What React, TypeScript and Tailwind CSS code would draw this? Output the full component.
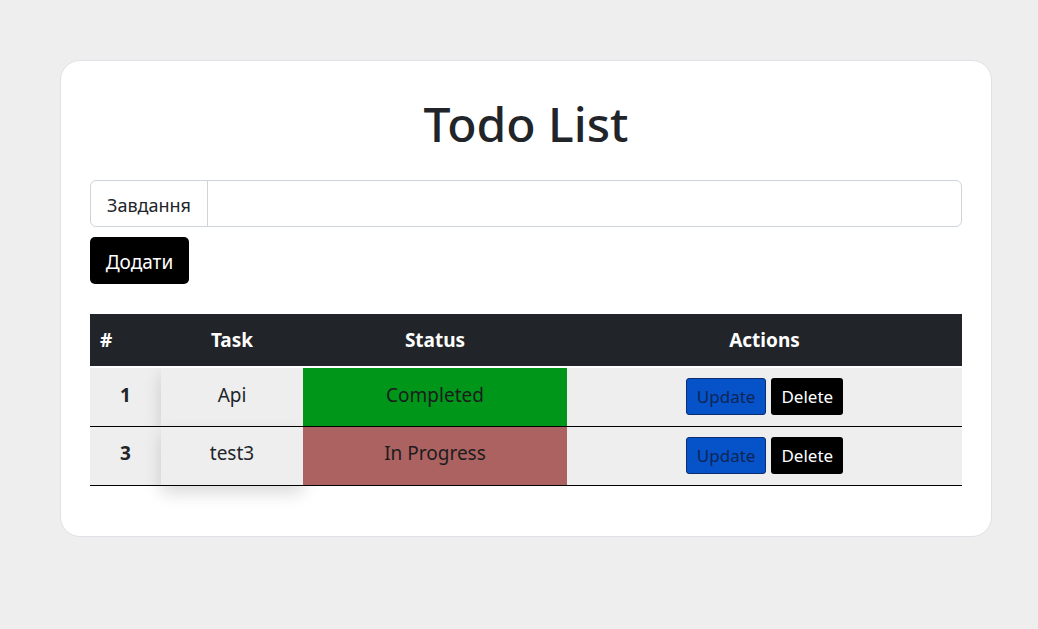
type Todo = {
  id: number;
  task: string;
  status: 'Completed' | 'In Progress';
};

const TODOS: Todo[] = [
  { id: 1, task: 'Api', status: 'Completed' },
  { id: 3, task: 'test3', status: 'In Progress' },
];

const STATUS_BG: Record<Todo['status'], string> = {
  Completed: 'bg-[#00961a]',
  'In Progress': 'bg-[#ad6262]',
};

function TodoRow({ todo }: { todo: Todo }) {
  return (
    <tr className="h-[59px] border-b border-black bg-[#eeeeee] text-[19px] text-[#212529]">
      <td className="pb-[4px] text-center font-bold">{todo.id}</td>
      <td className="pb-[4px] text-center shadow-[0_0.5rem_1rem_rgba(0,0,0,0.15)]">{todo.task}</td>
      <td className={`pb-[4px] text-center text-[#1c1c1c] ${STATUS_BG[todo.status]}`}>{todo.status}</td>
      <td className="text-center">
        <div className="flex items-center justify-center gap-[5px]">
          <button
            type="button"
            className="h-[37px] rounded-[3px] border border-[#0b2c6e] bg-[#0652c9] px-[10px] text-[17px] text-[#0d2655]"
          >
            Update
          </button>
          <button
            type="button"
            className="h-[37px] rounded-[3px] bg-black px-[10px] text-[17px] text-white"
          >
            Delete
          </button>
        </div>
      </td>
    </tr>
  );
}

export default function App() {
  return (
    <div
      className="min-h-screen bg-[#eeeeee] pt-[60px]"
      style={{ fontFamily: '"Noto Sans", "Open Sans", sans-serif' }}
    >
      <div className="ml-[60px] h-[477px] w-[932px] rounded-[20px] border border-[#dee2e6] bg-white px-[29px] pt-[34px]">
        <h1 className="text-center text-[48px] leading-[58px] font-medium text-[#212529]">Todo List</h1>

        <div className="mt-[27px] flex h-[47px] rounded-[6px] border border-[#ced4da]">
          <span className="flex items-center border-r border-[#ced4da] px-[16px] pt-[3px] text-[18px] text-[#212529]">
            Завдання
          </span>
          <input className="min-w-0 flex-1 px-4 outline-none" />
        </div>

        <button
          type="button"
          className="mt-[10px] h-[47px] w-[99px] rounded-[5px] bg-black pt-[4px] text-[19px] text-white"
        >
          Додати
        </button>

        <table className="mt-[30px] w-full table-fixed border-collapse">
          <colgroup>
            <col className="w-[71px]" />
            <col className="w-[142px]" />
            <col className="w-[264px]" />
            <col />
          </colgroup>
          <thead>
            <tr className="h-[53px] border-b-2 border-white bg-[#212529] text-[19px] font-bold text-white">
              <th className="pl-[10px] text-left">#</th>
              <th className="text-center">Task</th>
              <th className="text-center">Status</th>
              <th className="text-center">Actions</th>
            </tr>
          </thead>
          <tbody>
            {TODOS.map((todo) => (
              <TodoRow key={todo.id} todo={todo} />
            ))}
          </tbody>
        </table>
      </div>
    </div>
  );
}
